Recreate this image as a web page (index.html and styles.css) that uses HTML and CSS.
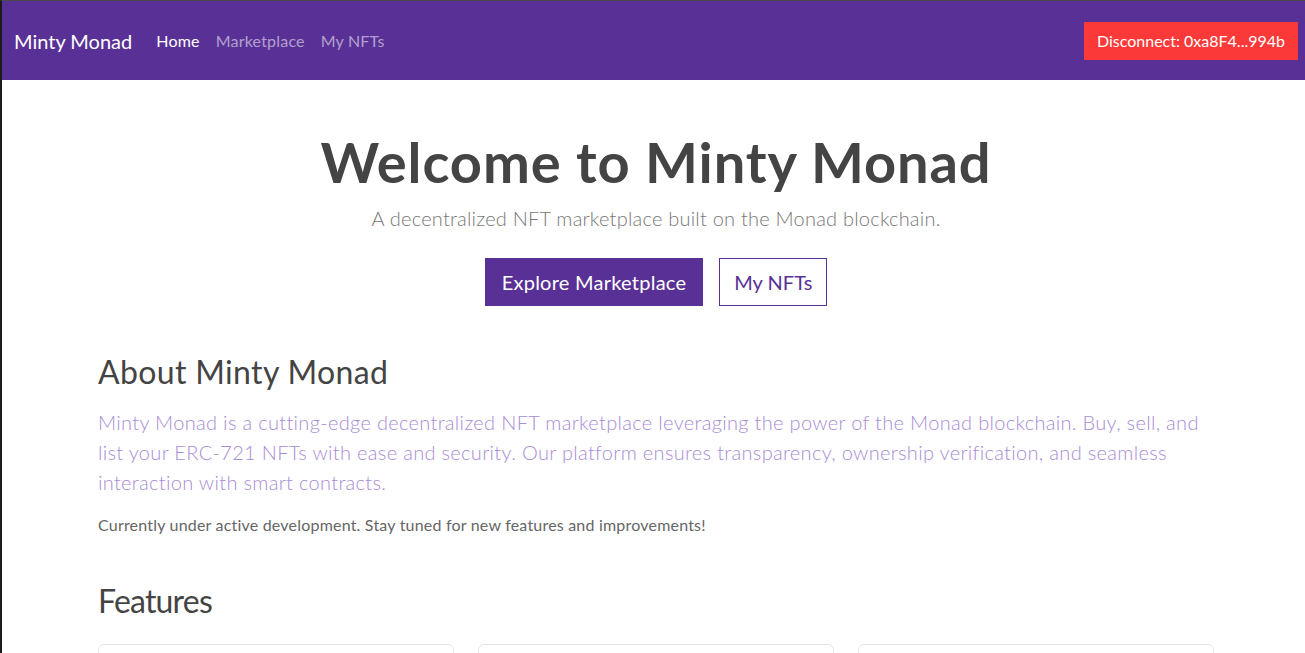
FILE: index.html
```html
<!DOCTYPE html>
<html lang="en">
<head>
<meta charset="utf-8">
<title>Minty Monad</title>
<link rel="stylesheet" href="styles.css">
</head>
<body>
<nav class="navbar">
  <div class="nav-left">
    <a class="brand" href="#">Minty Monad</a>
    <ul class="nav-links">
      <li><a class="nav-link active" href="#">Home</a></li>
      <li><a class="nav-link" href="#">Marketplace</a></li>
      <li><a class="nav-link" href="#">My NFTs</a></li>
    </ul>
  </div>
  <button class="btn btn-danger" type="button">Disconnect: 0xa8F4...994b</button>
</nav>
<main class="container">
  <section class="hero">
    <h1 class="hero-title">Welcome to Minty Monad</h1>
    <p class="hero-lead">A decentralized NFT marketplace built on the Monad blockchain.</p>
    <div class="hero-actions">
      <a class="btn btn-lg btn-primary" href="#">Explore Marketplace</a>
      <a class="btn btn-lg btn-outline" href="#">My NFTs</a>
    </div>
  </section>
  <section class="about">
    <h2 class="section-title">About Minty Monad</h2>
    <p class="about-lead">Minty Monad is a cutting-edge decentralized NFT marketplace leveraging the power of the Monad blockchain. Buy, sell, and list your ERC-721 NFTs with ease and security. Our platform ensures transparency, ownership verification, and seamless interaction with smart contracts.</p>
    <p class="about-note">Currently under active development. Stay tuned for new features and improvements!</p>
  </section>
  <section class="features">
    <h2 class="section-title">Features</h2>
    <div class="cards">
      <div class="card"></div>
      <div class="card"></div>
      <div class="card"></div>
    </div>
  </section>
</main>
</body>
</html>
```
FILE: styles.css
```css
html {
  overflow: hidden;
}
body {
  margin: 0;
  width: 1308px;
  border-top: 1px solid #4a4a4a;
  border-left: 2px solid #1c1c1c;
  font-family: "Lato", "Noto Sans", sans-serif;
  color: #444;
  background: #fff;
  font-size: 16px;
  line-height: 1.5;
}
a { text-decoration: none; }

.navbar {
  height: 79px;
  background: #593196;
  padding: 0 12px;
  display: flex;
  align-items: center;
  justify-content: space-between;
}
.nav-left {
  display: flex;
  align-items: center;
}
.brand {
  color: #fff;
  font-size: 20px;
  margin-right: 16px;
}
.nav-links {
  display: flex;
  list-style: none;
  margin: 0;
  padding: 0;
}
.nav-link {
  display: block;
  padding: 8px 8px;
  letter-spacing: 0.2px;
  color: rgba(255, 255, 255, 0.55);
}
.nav-link.active { color: #fff; }

.btn {
  display: inline-block;
  font-family: inherit;
  font-size: 16px;
  line-height: 1.5;
  padding: 6px 12px;
  border: 1px solid transparent;
  border-radius: 0;
  cursor: pointer;
}
.btn-danger {
  background: #fc3939;
  border-color: #fc3939;
  color: #fff;
}
.btn-lg {
  font-size: 20px;
  padding: 8px 16px;
  letter-spacing: 0.25px;
}
.btn-primary {
  background: #593196;
  border-color: #593196;
  color: #fff;
}
.btn-outline {
  background: #fff;
  border-color: #593196;
  color: #593196;
  padding: 8px 14px;
  letter-spacing: 0;
}

.container {
  width: 1116px;
  padding: 0 12px;
  margin: 0 auto;
}

.hero {
  text-align: center;
  padding-top: 48px;
}
.hero-title {
  margin: 0 0 8px;
  font-size: 56px;
  line-height: 1.2;
  font-weight: 700;
  letter-spacing: 0.9px;
  color: #444;
}
.hero-lead {
  margin: 0 0 25px;
  font-size: 20px;
  font-weight: 300;
  letter-spacing: 0.22px;
  color: #777;
}
.hero-actions {
  display: flex;
  justify-content: center;
  gap: 16px;
}

.section-title {
  margin: 0;
  font-size: 32px;
  font-weight: 400;
  line-height: 1.2;
  color: #444;
}
.about {
  margin-top: 47px;
}
.about .section-title {
  margin-bottom: 15px;
  letter-spacing: 0.35px;
}
.about-lead {
  margin: 0 0 16px;
  font-size: 20px;
  font-weight: 300;
  letter-spacing: 0.32px;
  color: #a98cd6;
}
.about-note {
  margin: 0;
  letter-spacing: 0.2px;
  color: #666;
}

.features {
  margin-top: 45px;
}
.features .section-title {
  margin-bottom: 24px;
  letter-spacing: -0.8px;
}
.cards {
  display: grid;
  grid-template-columns: repeat(3, 1fr);
  gap: 24px;
}
.card {
  border: 1px solid #e6e6e6;
  border-radius: 6px;
  height: 180px;
}
```
